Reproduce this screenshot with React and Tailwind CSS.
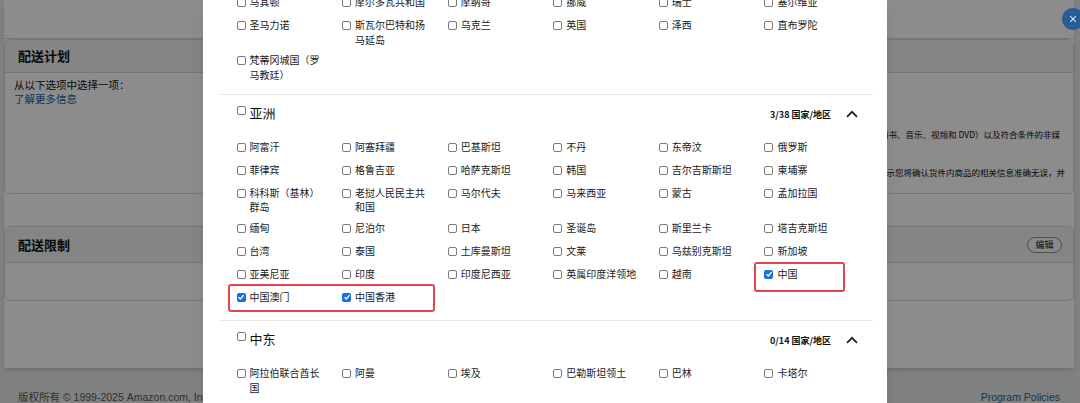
import React from 'react';

const europe = ['马其顿', '摩尔多瓦共和国', '摩纳哥', '挪威', '瑞士', '塞尔维亚', '圣马力诺', '斯瓦尔巴特和扬马延岛', '乌克兰', '英国', '泽西', '直布罗陀', '梵蒂冈城国（罗马教廷）'];
const asia = ['阿富汗', '阿塞拜疆', '巴基斯坦', '不丹', '东帝汶', '俄罗斯', '菲律宾', '格鲁吉亚', '哈萨克斯坦', '韩国', '吉尔吉斯斯坦', '柬埔寨', '科科斯（基林）群岛', '老挝人民民主共和国', '马尔代夫', '马来西亚', '蒙古', '孟加拉国', '缅甸', '尼泊尔', '日本', '圣诞岛', '斯里兰卡', '塔吉克斯坦', '台湾', '泰国', '土库曼斯坦', '文莱', '乌兹别克斯坦', '新加坡', '亚美尼亚', '印度', '印度尼西亚', '英属印度洋领地', '越南', '中国', '中国澳门', '中国香港'];
const middleEast = ['阿拉伯联合酋长国', '阿曼', '埃及', '巴勒斯坦领土', '巴林', '卡塔尔', '科威特', '黎巴嫩', '沙特阿拉伯', '土耳其', '也门', '伊拉克', '以色列', '约旦'];
const checkedSet = ['中国', '中国澳门', '中国香港'];

const Box = ({ checked, className = '' }) =>
  checked ? (
    <span className={`flex items-center justify-center w-[9px] h-[9px] rounded-[2px] bg-[#1a6fe0] shrink-0 ${className}`}>
      <svg viewBox="0 0 10 10" className="w-[8px] h-[8px]">
        <path d="M2 5.3 L4.2 7.4 L8.2 2.7" fill="none" stroke="white" strokeWidth="1.7" />
      </svg>
    </span>
  ) : (
    <span className={`block w-[9px] h-[9px] rounded-[2px] border border-[#7a7a7a] bg-white shrink-0 ${className}`} />
  );

const Item = ({ name }) => (
  <div className="flex items-start min-h-[17px]">
    <Box checked={checkedSet.includes(name)} className="mt-[3px]" />
    <span className="ml-[4px] w-[74px] text-[10px] leading-[14.5px] text-[#1a1a1a]">{name}</span>
  </div>
);

const Grid = ({ items }) => (
  <div className="grid grid-cols-6 gap-y-[6px] pl-[16.5px] w-[650px] items-start">
    {items.map((n) => (
      <Item key={n} name={n} />
    ))}
  </div>
);

const Section = ({ title, count, items }) => (
  <div className="border-b border-[#e8eaea] pb-[13.5px]">
    <div className="flex items-start justify-between pt-[9px] pl-[16.5px] pr-[15px]">
      <div className="flex items-start">
        <Box className="mt-[2px]" />
        <span className="ml-[4px] text-[13px] leading-[18px] text-[#0f1111]">{title}</span>
      </div>
      <div className="flex items-start">
        <span className="mt-[4px] text-[9px] leading-[14px] font-bold text-[#0f1111]">{count}</span>
        <svg viewBox="0 0 12 8" className="ml-[15px] mt-[5.5px] w-[12px] h-[8px]">
          <path d="M1 6.8 L6 1.8 L11 6.8" fill="none" stroke="#222" strokeWidth="1.8" />
        </svg>
      </div>
    </div>
    <div className="mt-[17.75px]">
      <Grid items={items} />
    </div>
  </div>
);

export default function App() {
  return (
    <div className="relative w-[1080px] h-[403px] overflow-hidden bg-[#e9ecec] font-['Noto_Sans_CJK_SC','Noto_Sans',sans-serif]">
      {/* page underneath */}
      <div className="ml-[4px] w-[1070px] h-[368px] bg-white shadow-md flex flex-col">
        <div className="h-[39px] border-b border-[#d5d9d9] shrink-0" />
        <div className="border border-[#d5d9d9] rounded-[6px] h-[155px] flex flex-col overflow-hidden">
          <div className="h-[33px] bg-[#f0f2f2] border-b border-[#d5d9d9] flex items-center pl-[13px] shrink-0">
            <span className="text-[13px] font-bold text-[#0f1111]">配送计划</span>
          </div>
          <div className="pl-[9px] pt-[5px] text-[10.5px] leading-[14px]">
            <div className="text-[#0f1111]">从以下选项中选择一项：</div>
            <div className="text-[#2162a1]">了解更多信息</div>
            <div className="mt-[21px] pr-[13px] text-right text-[8.5px] text-[#0f1111]">
              您可以向国际地址配送的商品包括媒介类商品（图书、音乐、视频和 DVD）以及符合条件的非媒
            </div>
            <div className="mt-[24px] pr-[8px] text-right text-[8.5px] text-[#0f1111]">
              在您确认发货时，即表示您将确认货件内商品的相关信息准确无误，并
            </div>
          </div>
        </div>
        <div className="mt-[32px] border border-[#d5d9d9] rounded-[6px] h-[75px] flex flex-col overflow-hidden">
          <div className="h-[36px] bg-[#f0f2f2] border-b border-[#d5d9d9] flex items-center justify-between pl-[13px] pr-[11px] shrink-0">
            <span className="text-[13px] font-bold text-[#0f1111]">配送限制</span>
            <span className="w-[35px] h-[16px] rounded-full border border-[#8d9096] bg-[#fafafa] flex items-center justify-center text-[9px] text-[#0f1111]">
              编辑
            </span>
          </div>
        </div>
      </div>
      <div className="flex justify-between items-center pl-[18px] pr-[20px] h-[35px] pt-[25px] text-[10.5px] font-['Liberation_Sans','Noto_Sans_CJK_SC',sans-serif]">
        <span className="text-[#565959]">版权所有 © 1999-2025 Amazon.com, Inc. 或其附属公司</span>
        <span className="text-[#2162a1]">Program Policies</span>
      </div>

      {/* dim overlay */}
      <div className="absolute inset-0 bg-black/[0.45]" />

      {/* close button */}
      <div className="absolute left-[1062px] top-[8px] w-[22px] h-[22px] rounded-full bg-[#275e98] flex items-center justify-center">
        <svg viewBox="0 0 10 10" className="w-[8px] h-[8px]">
          <path d="M1.5 1.5 L8.5 8.5 M8.5 1.5 L1.5 8.5" stroke="#dbe4ee" strokeWidth="1.3" />
        </svg>
      </div>

      {/* modal */}
      <div className="absolute left-[203px] top-0 w-[684px] h-[403px] bg-white overflow-hidden shadow-lg">
        <div className="mt-[-5px] pl-[17px] pr-[14px]">
          <div className="border-b border-[#e8eaea] pb-[12px]">
            <Grid items={europe} />
          </div>
          <Section title="亚洲" count="3/38 国家/地区" items={asia} />
          <Section title="中东" count="0/14 国家/地区" items={middleEast} />
        </div>
        <div className="absolute left-[25px] top-[284px] w-[207px] h-[28px] border-2 border-[#e4454c] rounded-[3px]" />
        <div className="absolute left-[551px] top-[262px] w-[91px] h-[30px] border-2 border-[#e4454c] rounded-[3px]" />
      </div>
    </div>
  );
}
